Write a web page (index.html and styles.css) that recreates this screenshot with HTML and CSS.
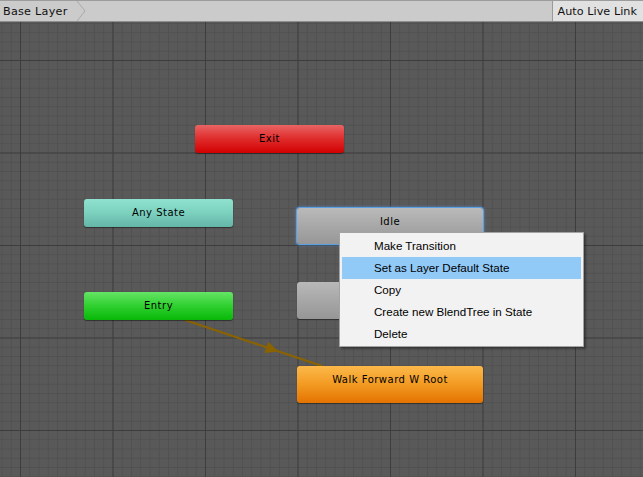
FILE: index.html
```html
<!DOCTYPE html>
<html>
<head>
<meta charset="utf-8">
<link rel="stylesheet" href="styles.css">
</head>
<body>
<div class="app">
  <div class="toolbar">
    <div class="crumb">
      <span class="crumb-label">Base Layer</span>
      <svg class="chev" width="10" height="20" viewBox="0 0 10 20"><path d="M1 0 L9 10 L1 20" fill="none" stroke="#a9a9a9" stroke-width="1"/></svg>
    </div>
    <div class="spacer"></div>
    <div class="live-btn">Auto Live Link</div>
  </div>
  <div class="canvas">
    <svg class="wires" width="643" height="455" viewBox="0 22 643 455">
      <line x1="185" y1="320" x2="322" y2="366" stroke="#8a6300" stroke-width="2.2"/>
      <g transform="rotate(18.6 271 349)">
        <polygon points="279,349 266,343 266,355" fill="#8a6300"/>
      </g>
    </svg>
    <div class="node exit">Exit</div>
    <div class="node any">Any State</div>
    <div class="node entry">Entry</div>
    <div class="node state idle">Idle</div>
    <div class="node state grey2"></div>
    <div class="node state walk">Walk Forward W Root</div>
    <ul class="menu">
      <li class="item">Make Transition</li>
      <li class="item active">Set as Layer Default State</li>
      <li class="item">Copy</li>
      <li class="item">Create new BlendTree in State</li>
      <li class="item">Delete</li>
    </ul>
  </div>
</div>
</body>
</html>
```

FILE: styles.css
```css
html, body {
  margin: 0;
  padding: 0;
  width: 643px;
  height: 477px;
  overflow: hidden;
  background: #595959;
}
.app {
  display: flex;
  flex-direction: column;
  width: 643px;
  height: 477px;
}
.toolbar {
  display: flex;
  align-items: stretch;
  height: 20px;
  background: #cbcbcb;
  border-top: 1px solid #9c9c9c;
  border-bottom: 1px solid #8e8e8e;
  font-family: "DejaVu Sans", sans-serif;
  font-size: 11.2px;
  color: #111;
  box-sizing: content-box;
  flex: none;
  white-space: nowrap;
}
.crumb {
  display: flex;
  align-items: center;
  padding-left: 3px;
}
.crumb-label {
  letter-spacing: 0.25px;
}
.chev {
  margin-left: 8px;
  display: block;
}
.spacer { flex: 1; }
.live-btn {
  flex: none;
  display: flex;
  align-items: center;
  padding: 0 6px 0 4px;
  background: #e1e1e1;
  border-left: 1px solid #9a9a9a;
  letter-spacing: 0.05px;
}
.canvas {
  position: relative;
  flex: 1;
  background-color: #595959;
  background-image:
    linear-gradient(to right, #3d3d3d 1px, transparent 1px),
    linear-gradient(to bottom, #3d3d3d 1px, transparent 1px),
    linear-gradient(to right, #515151 1px, transparent 1px),
    linear-gradient(to bottom, #515151 1px, transparent 1px);
  background-size: 92.5px 92.5px, 92.5px 92.5px, 9.25px 9.25px, 9.25px 9.25px;
  background-position: 20px 38px, 20px 38px, 20px 38px, 20px 38px;
  overflow: hidden;
}
.wires {
  position: absolute;
  left: 0;
  top: 0;
}
.node {
  position: absolute;
  box-sizing: border-box;
  border-radius: 3px;
  font-family: "DejaVu Sans", sans-serif;
  font-size: 10px;
  letter-spacing: 0.5px;
  color: #000;
  text-align: center;
  line-height: 28px;
  box-shadow: 0 1px 1px rgba(0,0,0,0.45);
}
.exit {
  left: 195px; top: 103px; width: 149px; height: 28px;
  background: linear-gradient(to bottom, #e96464 0%, #df2b2b 50%, #d20000 100%);
}
.any {
  left: 84px; top: 177px; width: 149px; height: 28px;
  background: linear-gradient(to bottom, #8ee2cf 0%, #7cd0be 50%, #64b6a6 100%);
}
.entry {
  left: 84px; top: 270px; width: 149px; height: 28px;
  background: linear-gradient(to bottom, #66e466 0%, #2fcf2f 50%, #08b808 100%);
}
.state {
  width: 186px;
  height: 37px;
  line-height: 14px;
  padding-top: 7px;
}
.idle {
  left: 297px; top: 186px; height: 36px;
  background: linear-gradient(to bottom, #bababa 0%, #a6a6a6 55%, #979797 100%);
  box-shadow: 0 0 0 1px #5d9fe0, 0 0 3px 1px rgba(80,150,230,0.8);
}
.grey2 {
  left: 297px; top: 260px;
  background: linear-gradient(to bottom, #b9b9b9 0%, #a5a5a5 55%, #969696 100%);
}
.walk {
  left: 297px; top: 344px;
  background: linear-gradient(to bottom, #fcb94a 0%, #f29a22 50%, #e47300 100%);
}
.menu {
  position: absolute;
  left: 339px;
  top: 210px;
  width: 245px;
  height: 115px;
  box-sizing: border-box;
  margin: 0;
  padding: 2px 2px;
  list-style: none;
  background: #f2f2f2;
  border: 1px solid #a3a3a3;
  box-shadow: 2px 2px 2px rgba(0,0,0,0.35);
  font-family: "Liberation Sans", Arial, sans-serif;
  font-size: 11.6px;
  color: #000;
}
.item {
  height: 22px;
  line-height: 22px;
  padding-left: 32px;
}
.item.active {
  background: #91c9f7;
}
```
